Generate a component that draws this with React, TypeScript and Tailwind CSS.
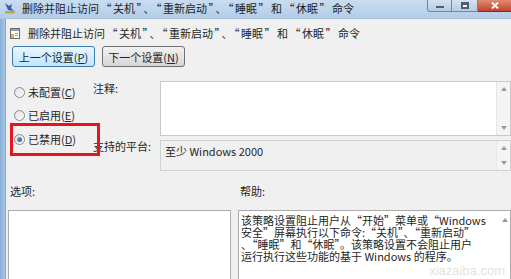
import React from "react";

function Radio({ label, k, checked }: { label: string; k: string; checked?: boolean }) {
  return (
    <div className="flex items-center gap-[3px] h-[14px]">
      <span className="relative w-[11px] h-[11px] rounded-full border border-[#8b8b8b] bg-gradient-to-br from-[#e2e2e2] to-[#fbfbfb] flex items-center justify-center">
        {checked && <span className="w-[5px] h-[5px] rounded-full bg-gradient-to-br from-[#7fb2e4] to-[#1a4f8f]" />}
      </span>
      <span>
        {label}(<span className="underline underline-offset-1">{k}</span>)
      </span>
    </div>
  );
}

function ScrollBar({ h }: { h: string }) {
  return (
    <div className={`w-[14px] ${h} flex flex-col justify-between items-center py-[5px] bg-[#f4f4f4] border-l border-[#e6e6e6]`}>
      <svg width="6" height="4" viewBox="0 0 6 4">
        <path d="M0 4 L3 0 L6 4 Z" fill="#9a9a9a" />
      </svg>
      <svg width="6" height="4" viewBox="0 0 6 4">
        <path d="M0 0 L3 4 L6 0 Z" fill="#9a9a9a" />
      </svg>
    </div>
  );
}

// quotes in the original are set with extra room round them
function Quoted({ text, q }: { text: string; q: string }) {
  return (
    <>
      {text.split(/([“”])/).map((part, i) =>
        part === "“" || part === "”" ? (
          <span key={i} className={q}>
            {part}
          </span>
        ) : (
          <React.Fragment key={i}>{part}</React.Fragment>
        )
      )}
    </>
  );
}

const policyName = "删除并阻止访问“关机”、“重新启动”、“睡眠”和“休眠”命令";

function TitleBar() {
  return (
    <div className="h-[19px] flex items-start bg-gradient-to-b from-[#c9dcf0] to-[#b3cde8] border-b border-[#a9c0d9]">
      <div className="flex items-center h-[16px] pl-[4px] gap-[6px] flex-1">
        <svg width="12" height="12" viewBox="0 0 12 12">
          <path d="M1 1 L5 4 L8 2 L7 6 L10 9 L4 8 Z" fill="#2f5fa8" />
          <rect x="1" y="9" width="10" height="2.5" fill="#c9a24a" />
        </svg>
        <span className="text-[#1d1d1d] whitespace-nowrap">
          <Quoted text={policyName} q="mx-[1.5px]" />
        </span>
      </div>
      <div className="flex">
        <div className="w-[25px] h-[12px] rounded-bl-[3px] border border-t-0 border-[#6f87a3] bg-gradient-to-b from-[#d5e2f0] to-[#b7cbe0] flex items-center justify-center">
          <span className="w-[8px] h-[2px] bg-[#f3f6fa] border border-[#4c5d70] mt-[3px]" />
        </div>
        <div className="w-[26px] h-[12px] border-b border-r border-[#6f87a3] bg-gradient-to-b from-[#d5e2f0] to-[#b7cbe0] flex items-center justify-center">
          <span className="w-[8px] h-[7px] border-2 border-[#4c5d70] border-t-[3px] bg-[#f3f6fa]" />
        </div>
        <div className="w-[33px] h-[12px] border-b border-[#7a2e22] bg-gradient-to-b from-[#e28a72] to-[#c2422e] flex items-center justify-center">
          <svg width="8" height="7" viewBox="0 0 8 7">
            <path d="M1 0.5 L7 6.5 M7 0.5 L1 6.5" stroke="#ffffff" strokeWidth="1.8" />
          </svg>
        </div>
      </div>
    </div>
  );
}

const helpLines = [
  "该策略设置阻止用户从“开始”菜单或“Windows",
  "安全”屏幕执行以下命令:“关机”、“重新启动”",
  "、“睡眠”和“休眠”。该策略设置不会阻止用户",
  "运行执行这些功能的基于 Windows 的程序。",
];

export default function App() {
  return (
    <div className="w-[511px] h-[279px] overflow-hidden relative bg-[#f0f0f0] font-['Noto_Sans_CJK_SC','Liberation_Sans',sans-serif] text-[11px] leading-[12px] text-[#262626]">
      <TitleBar />
      <div className="flex h-[260px]">
        <div className="w-[6px] bg-gradient-to-r from-[#86aed8] to-[#a9c7e6] border-r border-[#8aa5c3]" />
        <div className="flex-1 flex flex-col">
          {/* policy title */}
          <div className="mt-[8px] h-[14px] flex items-center pl-[4px] gap-[8px]">
            <svg width="10" height="11" viewBox="0 0 10 11">
              <rect x="0.5" y="0.5" width="9" height="10" fill="#fff" stroke="#6b6b6b" />
              <rect x="1" y="1" width="8" height="2" fill="#8aa0b8" />
              <rect x="1" y="6" width="3" height="4" fill="#d9b63c" />
              <rect x="5" y="5" width="3" height="1" fill="#9a9a9a" />
              <rect x="5" y="7" width="3" height="1" fill="#9a9a9a" />
            </svg>
            <span className="whitespace-nowrap">
              <Quoted text={policyName} q="mx-[1.5px]" />
            </span>
          </div>

          {/* prev / next */}
          <div className="mt-[7px] flex gap-[7px] pl-[6px]">
            <button className="w-[83px] h-[21px] rounded-[3px] border border-[#3d7bad] bg-gradient-to-b from-[#eaf6fd] to-[#bee6fd] flex items-center justify-center">
              上一个设置(<span className="underline underline-offset-1">P</span>)
            </button>
            <button className="w-[83px] h-[21px] rounded-[3px] border border-[#707070] bg-gradient-to-b from-[#f2f2f2] to-[#d6d6d6] flex items-center justify-center">
              下一个设置(<span className="underline underline-offset-1">N</span>)
            </button>
          </div>

          {/* state + comment + platform */}
          <div className="mt-[14px] flex pl-[8px]">
            <div className="w-[79px] flex flex-col">
              <div className="mt-[4px]">
                <Radio label="未配置" k="C" />
              </div>
              <div className="mt-[9px]">
                <Radio label="已启用" k="E" />
              </div>
              <div className="mt-[10px] relative">
                <Radio label="已禁用" k="D" checked />
                <div className="absolute -left-[4px] -top-[9px] w-[90px] h-[33px] border-[3px] border-[#e4151c] z-10" />
              </div>
            </div>
            <div className="flex-1 flex flex-col">
              <div className="flex">
                <div className="w-[67px] leading-[14px]">注释:</div>
                <div className="flex-1 h-[55px] flex bg-white border border-[#c9c9c9]">
                  <div className="flex-1" />
                  <ScrollBar h="h-[53px]" />
                </div>
              </div>
              <div className="flex mt-[4px]">
                <div className="w-[67px]">支持的平台:</div>
                <div className="flex-1 h-[31px] flex bg-[#f0f0f0] border border-[#d2d2d2]">
                  <div className="flex-1 pl-[4px] pt-[4px]">至少 Windows 2000</div>
                  <ScrollBar h="h-[29px]" />
                </div>
              </div>
            </div>
          </div>

          {/* options / help */}
          <div className="mt-[14px] grid grid-cols-[223px_1fr] gap-x-[7px] pl-[2px]">
            <div className="pl-[2px]">选项:</div>
            <div className="pl-[2px]">帮助:</div>
            <div className="mt-[13px] h-[80px] bg-white border border-[#ababab]" />
            <div className="mt-[13px] h-[80px] flex bg-white border border-[#ababab]">
              <div className="flex-1 pl-[2px] pt-[3px] leading-[12px] whitespace-nowrap">
                {helpLines.map((line, i) => (
                  <div key={i}>{line}</div>
                ))}
              </div>
              <div className="w-[11px] flex flex-col items-center pt-[7px]">
                <svg width="6" height="4" viewBox="0 0 6 4">
                  <path d="M0 4 L3 0 L6 4 Z" fill="#9a9a9a" />
                </svg>
              </div>
            </div>
          </div>
        </div>
      </div>
      <div className="absolute right-[6px] bottom-[2px] text-[13px] leading-none font-['Liberation_Sans',sans-serif] text-[#dcdcdc] opacity-80">
        xiazaiba.com
      </div>
    </div>
  );
}
